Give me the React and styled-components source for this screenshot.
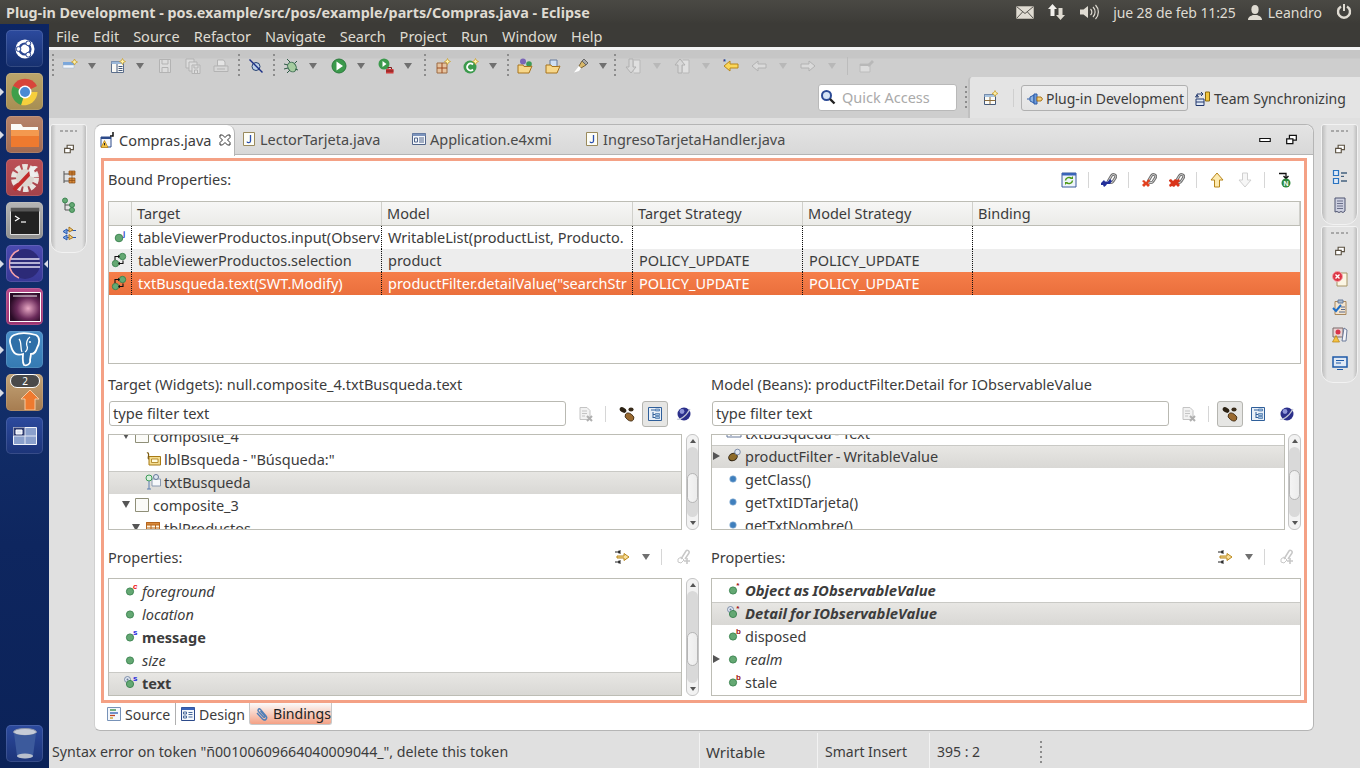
import React from 'react';
import styled, { createGlobalStyle } from 'styled-components';

const UI_FONT = '"Noto Sans", "Open Sans", sans-serif';

const GlobalStyle = createGlobalStyle`
  html, body { margin: 0; padding: 0; background: #e0e0e0; }
  body { font-family: ${UI_FONT}; font-size: 14.5px; color: #3c3c3c; }
  * { box-sizing: border-box; }
  svg { display: block; flex: none; }
`;

/* ---------- small drawn icons ---------- */

const Svg = ({ size = 16, children }) => (
  <svg width={size} height={size} viewBox="0 0 16 16">{children}</svg>
);

const Star = ({ x = 12, y = 3 }) => (
  <path d={`M${x} ${y - 3}l1 2 2 1-2 1-1 2-1-2-2-1 2-1z`} fill="#fff2a8" stroke="#c79a22" strokeWidth=".7" />
);

const Dot = ({ cx = 8, cy = 8, r = 3.6 }) => (
  <circle cx={cx} cy={cy} r={r} fill="#64a873" stroke="#37804c" strokeWidth=".9" />
);

const Letter = ({ c, color, x = 11, y = 5, size = 8 }) => (
  <text x={x} y={y} fontSize={size} fontWeight="700" fontFamily="Liberation Sans, sans-serif" fill={color}>{c}</text>
);

const PropIcon = ({ letter, color, target }) => (
  <Svg>
    {target && <circle cx="4.5" cy="4.5" r="3" fill="#dfe6f0" stroke="#66799a" strokeWidth=".8" />}
    {target && <circle cx="4.5" cy="4.5" r="1" fill="#66799a" />}
    <Dot cx={7} cy={target ? 9 : 8.5} />
    {letter && <Letter c={letter} color={color} x="10" y="6" />}
  </Svg>
);

const MethodIcon = () => <Svg><circle cx="7" cy="8" r="3.3" fill="#3f7fbd" stroke="#9dbcda" strokeWidth=".6" /></Svg>;

const BindIcon = () => (
  <Svg>
    <Dot cx="11.5" cy="4.5" r="3.2" />
    <Dot cx="4.5" cy="11.5" r="3.2" />
    <path d="M4 8V4.500h3.500M12 8.500v3H8.500" stroke="#111" strokeWidth="1.100" fill="none" />
    <path d="M7 2.800l2 1.700-2 1.700zM9 9.800l-2 1.700 2 1.700z" fill="#111" />
  </Svg>
);

const InputBindIcon = () => (
  <Svg>
    <Dot cx="8" cy="9" r="3.8" />
    <Letter c="j" color="#2a43c8" x="12" y="6.500" />
  </Svg>
);

const FileTypeIcon = () => (
  <Svg>
    <path d="M2.500 1.500h11v13h-11z" fill="#fdfdf6" stroke="#9a8a5c" />
    <path d="M9.500 4v6c0 2-3 2.200-3.500 .6" fill="none" stroke="#2a4fb0" strokeWidth="1.300" />
  </Svg>
);

const DesignerTabIcon = () => (
  <Svg>
    <path d="M1 5h10v10H1z" fill="#f5f7fb" stroke="#2c4a8a" />
    <path d="M1 5h10v2H1z" fill="#2c4a8a" />
    <path d="M13 0v4h-3" fill="none" stroke="#111" strokeWidth="1.500" />
    <path d="M4.500 8.500l-3.500 7h7z" fill="#f5c242" stroke="#b57f10" strokeWidth=".7" />
    <path d="M4.500 11v2.300" stroke="#222" />
  </Svg>
);

const XmiIcon = () => (
  <Svg>
    <path d="M1.500 2.500h13v11h-13z" fill="#f4f7fb" stroke="#51658a" />
    <path d="M1.500 2.500h13V5h-13z" fill="#7c94bd" />
    <path d="M3.500 7h3v4h-3zM8 7h5M8 9h5M8 11h5" fill="none" stroke="#51658a" />
  </Svg>
);

const CloseGlyph = () => (
  <svg width="12" height="12" viewBox="0 0 12 12">
    <path d="M1 1h2.500L6 3.500 8.500 1H11v2.500L8.500 6 11 8.500V11H8.500L6 8.500 3.500 11H1V8.500L3.500 6 1 3.500z" fill="#fff" stroke="#333" strokeWidth="1" />
  </svg>
);

const MinimizeIcon = () => <Svg size={12}><path d="M1 6h14v4H1z" fill="#fff" stroke="#111" strokeWidth="1.500" /></Svg>;

const RestoreIcon = ({ color = '#111', size = 11 }) => (
  <Svg size={size}>
    <path d="M5 2h10v7H5z" fill="#fff" stroke={color} strokeWidth="1.800" />
    <path d="M1 7h9v7H1z" fill="#fff" stroke={color} strokeWidth="1.800" />
  </Svg>
);

const FloppyIcon = () => (
  <Svg>
    <path d="M2.500 1.500h11v13h-11z" fill="#dcdcdc" stroke="#b3b3b3" />
    <path d="M5 2v4h6V2M5 14V9.500h6V14" fill="none" stroke="#b3b3b3" />
  </Svg>
);

const SaveAllIcon = () => (
  <Svg>
    <path d="M1 1h8v9H1z" fill="#dcdcdc" stroke="#b3b3b3" />
    <path d="M4 4h8v9H4z" fill="#dcdcdc" stroke="#b3b3b3" />
    <path d="M7 7h8v8.500H7z" fill="#dcdcdc" stroke="#b3b3b3" />
    <path d="M9 7.500V10h4V7.500M9.500 15v-3h3v3" fill="none" stroke="#b3b3b3" />
  </Svg>
);

const PrintIcon = () => (
  <Svg>
    <path d="M4.500 2h6L12 4v4H4.500z" fill="#e4e4e4" stroke="#b3b3b3" />
    <path d="M1 8h14v5.500H1z" fill="#d6d6d6" stroke="#b3b3b3" />
    <path d="M4 11h8" stroke="#b3b3b3" />
  </Svg>
);

const NewPluginIcon = () => (
  <Svg>
    <path d="M1 4h11v3H1z" fill="#7aa7dc" />
    <path d="M1 7h11v3H1z" fill="#f2f6fb" stroke="#9ab0cc" strokeWidth=".5" />
    <Star x={12.5} y={4} />
  </Svg>
);

const NewClassesIcon = () => (
  <Svg>
    <path d="M1.500 3.500h12v11h-12z" fill="#f8f8f4" stroke="#5c6f8c" />
    <path d="M1.500 3.500h12V6h-12z" fill="#9cb8d8" />
    <path d="M7 6v8M8.500 8.500h4M8.500 10.500h4M8.500 12.500h4" stroke="#44597a" />
    <Star x={12.5} y={3.5} />
  </Svg>
);

const SkipIcon = () => (
  <Svg>
    <ellipse cx="8" cy="8.500" rx="4" ry="4" fill="#bcd0e8" stroke="#24406f" />
    <path d="M1.500 1.500l13 13" stroke="#1b2f86" strokeWidth="1.500" />
  </Svg>
);

const DebugIcon = () => (
  <Svg>
    <ellipse cx="9" cy="9" rx="4" ry="5" fill="#a5cc9f" stroke="#3d6e52" transform="rotate(-30 9 9)" />
    <path d="M4 1l3 3M1 6l4 1M1 11l4-1M4 15l3-3M14 3l-2 2M15 12l-3-1" stroke="#2c5a44" strokeWidth="1" />
  </Svg>
);

const RunIcon = () => (
  <Svg>
    <circle cx="8" cy="8" r="7" fill="#3b9a4c" stroke="#2b7a3c" />
    <path d="M5.500 3.500L12 8l-6.500 4.500z" fill="#fff" />
  </Svg>
);

const ExtRunIcon = () => (
  <Svg>
    <circle cx="6" cy="6" r="5.500" fill="#3b9a4c" />
    <path d="M4.500 3l4 3-4 3z" fill="#fff" />
    <path d="M8 11h7.500v4.500H8z" fill="#cc3b3b" />
    <path d="M10 11V9.500h3.500V11M8 13h7.500" fill="none" stroke="#7c1c1c" />
  </Svg>
);

const NewPackageIcon = () => (
  <Svg>
    <path d="M2 5h10v10H2z" fill="#e6c4a0" stroke="#9c6a42" />
    <path d="M7 5v10M2 10h10" stroke="#9c4a22" />
    <Star x={12.5} y={3.5} />
  </Svg>
);

const NewCIcon = () => (
  <Svg>
    <circle cx="7" cy="9" r="6.500" fill="#3b9a4c" />
    <path d="M10 6.500a3.500 3.500 0 1 0 0 5" fill="none" stroke="#fff" strokeWidth="1.800" />
    <Star x={12.5} y={3.5} />
  </Svg>
);

const OpenTypeIcon = () => (
  <Svg>
    <circle cx="6" cy="3.500" r="3" fill="#7a66b8" />
    <circle cx="12" cy="6" r="2.800" fill="#3d9a58" />
    <path d="M1 7h5l1 1.500h6L15 8l-3 7H1z" fill="#f7d78a" stroke="#a8741c" />
  </Svg>
);

const OpenTaskIcon = () => (
  <Svg>
    <path d="M5 2h7v7H5z" fill="#cfe0f4" stroke="#64789a" />
    <path d="M1 7h5l1 1.500h6L15 8l-3 7H1z" fill="#f7d78a" stroke="#a8741c" />
  </Svg>
);

const HighlightIcon = () => (
  <Svg>
    <path d="M9 3l4 4-5 3-2-2z" fill="#d8b86a" stroke="#7c6434" />
    <path d="M11 1l4 4-2 2-4-4z" fill="#a8a8a8" stroke="#666" />
    <path d="M6 8l2 2-2 3-5 1.500z" fill="#fff" />
  </Svg>
);

const ArrowDocIcon = ({ up }) => (
  <Svg>
    <path d="M9 2h6v13H9" fill="#e0e0e0" stroke="#b8b8b8" />
    <path d={up ? 'M6 1l5 6H8v8H4V7H1z' : 'M4 1h4v8h3l-5 6-5-6h3z'} fill="#d8d8d8" stroke="#b0b0b0" />
  </Svg>
);

const AnnotationBackIcon = () => (
  <Svg>
    <path d="M1 8l6-5v3h8v4H7v3z" fill="#fbd75a" stroke="#b8861a" />
    <Letter c="*" color="#1b3a8a" x="0" y="6" size="7" />
  </Svg>
);

const GreyArrow = ({ right }) => (
  <Svg>
    <path d={right ? 'M15 8L9 3v3H1v4h8v3z' : 'M1 8l6-5v3h8v4H7v3z'} fill="#dadada" stroke="#b2b2b2" />
  </Svg>
);

const PinIcon = () => (
  <Svg>
    <path d="M1 6h10v8H1z" fill="#dcdcdc" stroke="#bcbcbc" />
    <path d="M1 6h10v2H1zM8 7l5-5 2 2-5 5z" fill="#b8b8b8" />
  </Svg>
);

const SearchGlass = () => (
  <Svg>
    <circle cx="6.500" cy="6.500" r="4.500" fill="#d6e4f6" stroke="#2b4a96" strokeWidth="2" />
    <path d="M10 10l4.500 4.500" stroke="#222" strokeWidth="2.400" />
  </Svg>
);

const OpenPerspectiveIcon = () => (
  <Svg>
    <path d="M1.500 4.500h11v10h-11z" fill="#fbfbf6" stroke="#44597a" />
    <path d="M1.500 4.500h11V7h-11z" fill="#a7c3e0" />
    <path d="M7 7v7.500M1.500 10.500h11" stroke="#8a6a3a" />
    <Star x={12} y={3.5} />
  </Svg>
);

const PluginPerspectiveIcon = () => (
  <Svg>
    <path d="M0 8h3M3 6l4-2v8l-4-2z" fill="#8db4e4" stroke="#2c5ca8" />
    <path d="M7 3h3v10H7z" fill="#6e9ad8" stroke="#2c5ca8" />
    <path d="M10 6h4l1.500 2-1.500 2h-4z" fill="#f2cf7c" stroke="#a8741c" />
  </Svg>
);

const TeamIcon = () => (
  <Svg>
    <path d="M1 8h8v6.500H1zM1 11h8" fill="#dfe8f5" stroke="#22386e" />
    <path d="M2 5.500V3h6M6 1l2 2-2 2M2 4L.5 6h3z" fill="none" stroke="#22386e" />
    <path d="M10.500 1h4v9h-4z" fill="#f2c53d" stroke="#8a6a10" />
  </Svg>
);

const RefreshIcon = () => (
  <Svg>
    <path d="M1 1h14v14H1z" fill="#eef4fb" stroke="#3a5a9a" />
    <path d="M1 1h14v2.500H1z" fill="#3a64b8" />
    <path d="M4.500 8.500a3.500 3.500 0 0 1 6-2M11.500 8.500a3.500 3.500 0 0 1-6 2" fill="none" stroke="#4e9a16" strokeWidth="1.500" />
    <path d="M9 7h3V4zM7 10H4v3z" fill="#4e9a16" />
  </Svg>
);

const CHAIN = 'M7 9.500l3.500-6C12 1.500 15.500 3 14.500 5.500L12 9.500c-1 1.500-3 1.500-4 .5';

const LinkIcon = ({ badge }) => (
  <Svg>
    <path d={CHAIN} fill="none" stroke="#6f6f6f" strokeWidth="2.800" />
    <path d={CHAIN} fill="none" stroke="#d8d8d8" strokeWidth="1" />
    {badge === 'edit' && <path d="M0 11l3-3 1 1.500h3L9 7l2 2-2 3H6l-1 1.500L3 15l-1-2H0z" fill="#23309a" />}
    {badge === 'remove' && <path d="M1 9l2-1 2 2 3-3 1 2-2 2 2 2-2 2-2-2-2 2-2-2 2-2z" fill="#e2411f" />}
    {badge === 'removeAll' && <path d="M0 8l2-1 2 2 2-2 2 1 2-1 1 2-2 2 2 2-2 2-2-2-2 2-2-1-2 1-1-2 2-2-2-2z" fill="#d9341a" />}
  </Svg>
);

const UpArrowIcon = () => (
  <Svg><path d="M8 1l6 7h-3.500v7h-5V8H2z" fill="#fdeab0" stroke="#b8861a" /></Svg>
);

const DownArrowIcon = () => (
  <Svg><path d="M8 15l6-7h-3.500V1h-5v7H2z" fill="#f6f6f6" stroke="#d0d0d0" /></Svg>
);

const NewBindIcon = () => (
  <Svg>
    <path d="M2 1.500h7v4M6.500 4L9 6.500 11.500 4" fill="none" stroke="#111" strokeWidth="1.300" />
    <circle cx="9" cy="11" r="4.500" fill="#2d8a3e" />
    <Letter c="N" color="#fff" x="6.500" y="13.500" size="7" />
  </Svg>
);

const ClearFilterIcon = () => (
  <Svg>
    <path d="M2 1.500h7l3 3v9H2zM4 5h5M4 7.500h5M4 10h3" fill="#f2f2f2" stroke="#c4c4c4" />
    <path d="M9 10l5 5M14 10l-5 5" stroke="#b0b0b0" strokeWidth="2" />
  </Svg>
);

const BeansIcon = () => (
  <Svg>
    <ellipse cx="4" cy="4" rx="3.600" ry="2.400" fill="#2c2214" transform="rotate(30 4 4)" />
    <ellipse cx="12" cy="3.500" rx="2.600" ry="2" fill="#3a2c1a" />
    <ellipse cx="10.500" cy="11" rx="4.800" ry="3.300" fill="#9a6a30" stroke="#3e2a12" strokeWidth=".8" transform="rotate(35 10.500 11)" />
  </Svg>
);

const TreeModeIcon = () => (
  <Svg>
    <path d="M1.500 1.500h13v13h-13z" fill="#e9f0f8" stroke="#2f5f9a" />
    <path d="M4 4h4M6 6v6M6 8.500h2M6 11.500h2" stroke="#2f5f9a" fill="none" />
    <path d="M8.500 7.500h4v2h-4zM8.500 10.500h4v2h-4zM8.500 3h4v2h-4z" fill="#9fbfe0" stroke="#2f5f9a" strokeWidth=".6" />
  </Svg>
);

const GlobeIcon = () => (
  <Svg>
    <circle cx="8" cy="8" r="6.500" fill="#2b2f8a" />
    <circle cx="6" cy="5.500" r="2.400" fill="#8f96d8" />
    <path d="M1 13c2 1 8-1 13-10" stroke="#c4c8d6" strokeWidth="1.200" fill="none" />
  </Svg>
);

const CheckBoxIcon = () => (
  <Svg><path d="M1.500 1.500h13v13h-13z" fill="#fbfbf8" stroke="#8f8f78" /></Svg>
);

const LabelIcon = () => (
  <Svg>
    <path d="M4 5.500h11.500V14H4z" fill="#f3dc90" stroke="#a87a14" />
    <path d="M6.500 8H13v3.500H6.500z" fill="#fffbe0" stroke="#a87a14" strokeWidth=".8" />
    <path d="M2 2c1-1 2 1 1.500 3S3 8 4 8" fill="none" stroke="#7a5a10" strokeWidth="1.200" />
  </Svg>
);

const TextWidgetIcon = () => (
  <Svg>
    <path d="M7 5h8.500v7H7z" fill="#f6f8fb" stroke="#8a9ab0" />
    <circle cx="4" cy="4" r="3" fill="#d6f0dc" stroke="#3d9a58" />
    <circle cx="11" cy="3" r="2.500" fill="#dfe6f0" stroke="#66799a" />
    <path d="M4 7v8M2 15h4" stroke="#5a7fb0" />
  </Svg>
);

const TableIcon = () => (
  <Svg>
    <path d="M1.500 2.500h13v11h-13z" fill="#fff5df" stroke="#b5651d" />
    <path d="M1.500 2.500h13V5h-13zM6 5v8.500M10.500 5v8.500M1.500 8h13M1.500 11h13" fill="#d98a3a" stroke="#b5651d" />
  </Svg>
);

const TextTreeIcon = () => (
  <Svg><path d="M1 5h14M5 3v8M1 8h14v4H1z" fill="none" stroke="#66799a" /></Svg>
);

const BeanItemIcon = () => (
  <Svg>
    <ellipse cx="7" cy="9" rx="4.500" ry="3.500" fill="#8c6a2a" stroke="#2c2010" strokeWidth=".9" transform="rotate(-30 7 9)" />
    <circle cx="11.500" cy="4" r="2.800" fill="#dfe6f0" stroke="#66799a" strokeWidth=".8" />
  </Svg>
);

const ExpandIcon = () => (
  <Svg>
    <path d="M1 3h5M1 13h5M6 1v4M6 11v4M4 2l2 1-2 1M4 12l2 1-2 1" stroke="#222" fill="none" />
    <path d="M3 7h7V4.500L15 8l-5 3.500V9H3z" fill="#fbe09a" stroke="#b8861a" />
  </Svg>
);

const AddPropIcon = () => (
  <Svg>
    <path d="M5 10l5-8c1-1.500 4 0 3 2l-4 6" fill="none" stroke="#c8c8c8" strokeWidth="1.500" />
    <path d="M2 10l3-2 3 3-3 3-3-1z" fill="none" stroke="#c8c8c8" />
    <path d="M11 9v6M8 12h6" stroke="#c8c8c8" strokeWidth="1.600" />
  </Svg>
);

const SourcePageIcon = () => (
  <Svg>
    <path d="M1.500 1.500h13v13h-13z" fill="#f3f7fc" stroke="#7792b8" />
    <path d="M4 4h6" stroke="#2c8a3a" strokeWidth="1.300" /><path d="M4 7h8" stroke="#2a5ab0" strokeWidth="1.300" />
    <path d="M4 9.500h5" stroke="#c04020" strokeWidth="1.300" /><path d="M4 12h3" stroke="#c49a20" strokeWidth="1.300" />
  </Svg>
);

const DesignPageIcon = () => (
  <Svg>
    <path d="M1.500 1.500h13v13h-13z" fill="#f3f7fc" stroke="#2c4a8a" />
    <path d="M1.500 1.500h13V4h-13z" fill="#3a64b8" />
    <path d="M3.500 6h3v2h-3zM3.500 10h3v2h-3zM8.500 6.500h4M8.500 8.500h4M8.500 11h4" fill="none" stroke="#4a6a9a" />
  </Svg>
);

const PaperclipIcon = () => (
  <Svg>
    <path d="M3 7l5.500 6c2.500 2.500 5.500-.5 3.500-3L6.500 3.500C5 2 3 3.500 4.500 5.500L9.500 11c1 1 2-.2 1-1.500L6.500 5" fill="none" stroke="#4f7fb8" strokeWidth="1.400" />
  </Svg>
);

const PartHierarchyIcon = () => (
  <Svg>
    <path d="M3 2v12M3 5h5M3 12h5" stroke="#555" fill="none" />
    <path d="M8 2h6v4H8zM8 9h6v5H8z" fill="#d98a3a" stroke="#8a4a12" strokeWidth=".7" />
    <path d="M11 2v12M8 4h6M8 11.500h6" stroke="#8a4a12" strokeWidth=".7" />
  </Svg>
);

const GreenTreeIcon = () => (
  <Svg>
    <path d="M4 4v9M4 8h5M4 13h5" stroke="#555" fill="none" />
    <Dot cx="4" cy="3.500" r="2.500" />
    <Dot cx="11" cy="8" r="2.500" />
    <Dot cx="11" cy="13" r="2.500" />
  </Svg>
);

const BindingsPartIcon = () => (
  <Svg>
    <path d="M6 4L2 6.500 6 9zM6 10l-4 2.500L6 15z" fill="#7da8e0" stroke="#2a5ab0" />
    <path d="M6 5.500h9M6 12.500h9" stroke="#2a5ab0" />
    <path d="M8 2l4 3-4 2zM8 9.500l4 3-4 2z" fill="#f2cf7c" stroke="#a8741c" />
  </Svg>
);

const ChecklistIcon = () => (
  <Svg>
    <path d="M1.500 1.500h5v5h-5zM1.500 9.500h5v5h-5z" fill="#dfeaf8" stroke="#2a74c0" strokeWidth="1.200" />
    <path d="M9 4h6M9 12h6" stroke="#44617f" strokeWidth="1.400" />
    <path d="M9 8h3V6.800H9z" fill="#44617f" />
  </Svg>
);

const OutlineDocIcon = () => (
  <Svg>
    <path d="M3 1h10v13l-2 1.500-2-1-2 1-2-1-2 .5z" fill="#cdd0e0" stroke="#4f5470" />
    <path d="M5 4h6M5 6.500h6M5 9h6M5 11.500h6" stroke="#6a6f8a" />
  </Svg>
);

const ProblemsIcon = () => (
  <Svg>
    <path d="M5 2h10v13H5z" fill="#fbf6e4" stroke="#a89464" />
    <circle cx="5.500" cy="5.500" r="5" fill="#dc3545" stroke="#f2a0a8" />
    <path d="M3.500 3.500l4 4M7.500 3.500l-4 4" stroke="#fff" strokeWidth="1.400" />
  </Svg>
);

const TasksIcon = () => (
  <Svg>
    <path d="M3 2.500h11v13H3z" fill="#f2e4d0" stroke="#a8875c" />
    <path d="M6 1h5v3H6z" fill="#aabbd0" stroke="#667a9a" />
    <path d="M1 9l3 3 5-6" fill="none" stroke="#1e6fc8" strokeWidth="2" />
    <path d="M9 8h4M9 10.500h4M7 13h6" stroke="#5a6a8a" />
  </Svg>
);

const ErrorLogIcon = () => (
  <Svg>
    <path d="M1 1h10v9H1z" fill="#e8d4d4" stroke="#7a6a6a" />
    <circle cx="6" cy="5" r="2.500" fill="#d9344a" />
    <path d="M12 1l3 2-1 11h-4z" fill="#f4f4f8" stroke="#6a7a9a" />
    <path d="M4 8.500L7.500 15H.5z" fill="#f5c242" stroke="#b57f10" strokeWidth=".7" />
  </Svg>
);

const ConsoleIcon = () => (
  <Svg>
    <path d="M1 2h14v10H1z" fill="#dfe8f4" stroke="#1e5aa8" strokeWidth="1.500" />
    <path d="M4 5.500h8M4 8h5" stroke="#1e5aa8" />
    <path d="M5 14h6v1H5z" fill="#1e5aa8" />
  </Svg>
);

/* tray */
const MailIcon = () => (
  <svg width="18" height="13" viewBox="0 0 18 13">
    <path d="M.5.5h17v12H.5z" fill="#dfdbd2" stroke="#b5b1a8" />
    <path d="M.5.500L9 7.500 17.500.5M.5 12.500L6.500 6M17.500 12.500L11.500 6" fill="none" stroke="#55534d" />
  </svg>
);

const TrafficIcon = () => (
  <svg width="18" height="16" viewBox="0 0 18 16">
    <path d="M4.500 0L9 5H6.500v7h-4V5H0z" fill="#f2f0ec" />
    <path d="M12.500 16L8 11h2.500V4h4v7H17z" fill="#dfdbd2" />
  </svg>
);

const VolumeIcon = () => (
  <svg width="20" height="16" viewBox="0 0 20 16">
    <path d="M0 5.500h3.500L8 2v12l-4.500-3.500H0z" fill="#dfdbd2" />
    <path d="M10.500 5a4 4 0 0 1 0 6M13 3a7 7 0 0 1 0 10M15.500 1a10 10 0 0 1 0 14" fill="none" stroke="#dfdbd2" strokeWidth="1.200" />
  </svg>
);

const UserIcon = () => (
  <svg width="14" height="15" viewBox="0 0 14 15">
    <ellipse cx="7" cy="4.500" rx="3.600" ry="4.500" fill="#dfdbd2" />
    <path d="M0 15c0-3.500 3-4 5-5h4c2 1 5 1.500 5 5z" fill="#dfdbd2" />
  </svg>
);

const PowerIcon = () => (
  <svg width="16" height="16" viewBox="0 0 16 16">
    <path d="M5 2.500a6 6 0 1 0 6 0" fill="none" stroke="#dfdbd2" strokeWidth="2.400" />
    <path d="M8 0v7" stroke="#dfdbd2" strokeWidth="2" />
  </svg>
);

/* launcher */
const UbuntuLogo = () => (
  <svg width="24" height="24" viewBox="0 0 24 24">
    <circle cx="12" cy="12" r="9.500" fill="#fff" />
    <circle cx="12" cy="12" r="5.500" fill="none" stroke="#2b4793" strokeWidth="2.200" />
    <circle cx="5.500" cy="12" r="2.400" fill="#fff" stroke="#2b4793" />
    <circle cx="15.300" cy="6.300" r="2.400" fill="#fff" stroke="#2b4793" />
    <circle cx="15.300" cy="17.700" r="2.400" fill="#fff" stroke="#2b4793" />
  </svg>
);

const ChromeLogo = () => (
  <svg width="30" height="30" viewBox="0 0 30 30">
    <path d="M15 15L3 9a13.500 13.500 0 0 1 24 0z" fill="#d8453a" />
    <path d="M15 15h12.500A13.500 13.500 0 0 1 11 28z" fill="#f6cf3c" />
    <path d="M15 15l-4 13A13.500 13.500 0 0 1 3 9z" fill="#3f9f4a" />
    <circle cx="15" cy="15" r="6.500" fill="#fff" />
    <circle cx="15" cy="15" r="5" fill="#4a8ad4" />
  </svg>
);

const FolderLogo = () => (
  <svg width="30" height="28" viewBox="0 0 30 28">
    <path d="M1 3h10l2 3h15v5H1z" fill="#fbfaf6" />
    <path d="M1 9h28v17H1z" fill="#ee7a2f" />
    <path d="M1 9h28v6H1z" fill="#f4994f" />
  </svg>
);

const SettingsLogo = () => (
  <svg width="32" height="32" viewBox="0 0 32 32">
    <circle cx="16" cy="16" r="11" fill="none" stroke="#e9e4e0" strokeWidth="6" strokeDasharray="5 2" />
    <circle cx="16" cy="16" r="9" fill="#dcd6d0" />
    <path d="M5 28L22 10" stroke="#c22b2b" strokeWidth="4" />
    <path d="M20 8c2-4 6-5 9-3l-4 3 1 3 3 1c-1 3-5 4-8 2z" fill="#eee" />
  </svg>
);

const TerminalLogo = () => (
  <svg width="30" height="28" viewBox="0 0 30 28">
    <path d="M.5.5h29v27H.5z" fill="#222" stroke="#ddd" />
    <path d="M.5.5h29v4H.5z" fill="#555" />
    <path d="M5 9l4 2.500L5 14" fill="none" stroke="#fff" strokeWidth="1.200" />
    <path d="M11 15h5" stroke="#fff" strokeWidth="1.200" />
  </svg>
);

const EclipseLogo = () => (
  <svg width="32" height="32" viewBox="0 0 32 32">
    <circle cx="16" cy="16" r="15" fill="#2c2a78" />
    <path d="M1.500 11h29M1 15h30M1 19h30" stroke="#e4e0f4" strokeWidth="1.300" />
    <path d="M10 2a15 15 0 0 0 0 28" fill="none" stroke="#f4a0a8" strokeWidth="1.500" />
  </svg>
);

const PhotoLogo = () => (
  <svg width="32" height="30" viewBox="0 0 32 30">
    <defs>
      <radialGradient id="photoGlow" cx=".6" cy=".55" r=".6">
        <stop offset="0" stopColor="#e8a8c4" /><stop offset=".6" stopColor="#6a2a5a" /><stop offset="1" stopColor="#2a0c26" />
      </radialGradient>
    </defs>
    <path d="M.5.5h31v29H.5z" fill="url(#photoGlow)" stroke="#fff" />
    <path d="M4 4h24" stroke="#f4f0f4" />
  </svg>
);

const ElephantLogo = () => (
  <svg width="34" height="35" viewBox="0 0 34 35">
    <path d="M6 3c7-3 15-2 22 0 4 2 4 8 1 13-1 3-2 6-6 6l-1 6c1 4-3 6-6 5-2-3-1-8-1-11-6 2-10 0-12-8C1 9 2 5 6 3z" fill="#2f6fa8" stroke="#fff" strokeWidth="1.800" />
    <path d="M11 7c3 3 1 9 3 13M22 5c-3 2-4 6-3 9 1 2 0 5-2 6" fill="none" stroke="#fff" strokeWidth="1.300" />
    <circle cx="22" cy="10" r="1" fill="#fff" />
  </svg>
);

const UpdateArrow = () => (
  <svg width="18" height="20" viewBox="0 0 18 20">
    <path d="M9 0l9 9h-4v11H4V9H0z" fill="#ee7a2f" stroke="#f6c9a0" />
  </svg>
);

const WorkspaceLogo = () => (
  <svg width="24" height="18" viewBox="0 0 24 18">
    <path d="M.5.5h23v17H.5z" fill="#8aa0cc" stroke="#f2f4fa" strokeWidth="1" />
    <path d="M.5.5H12V9H.5z" fill="#2c3a70" />
    <path d="M3 3h6v4H3z" fill="#dde4f4" stroke="#fff" />
    <path d="M12 .5v17M.5 9h23" stroke="#e0e6f4" />
  </svg>
);

const TrashLogo = () => (
  <svg width="24" height="31" viewBox="0 0 24 31">
    <ellipse cx="12" cy="4" rx="11.500" ry="3.500" fill="#c6ccd8" stroke="#8f97aa" />
    <path d="M1 5l3 23c1 3 15 3 16 0l3-23c-4 3-18 3-22 0z" fill="#3c5a9c" />
    <ellipse cx="12" cy="28" rx="8" ry="2.500" fill="#b8bfcc" />
  </svg>
);

/* ---------- layout ---------- */

const Screen = styled.div`
  width: 1360px;
  height: 768px;
  display: flex;
  flex-direction: column;
  overflow: hidden;
`;

const TitleBar = styled.div`
  height: 24px;
  flex: none;
  display: flex;
  align-items: center;
  padding-left: 6px;
  background: linear-gradient(#4a4944, #3c3b37);
  color: #dfdbd2;
`;

const WindowTitle = styled.div`
  flex: 1;
  font-size: 14.35px;
  font-weight: 700;
  white-space: nowrap;
`;

const Tray = styled.div`
  display: flex;
  align-items: center;
  padding-right: 8px;
`;

const TrayText = styled.span`
  font-size: 14px;
  letter-spacing: ${({ $tight }) => ($tight ? '-0.1px' : '0')};
  margin-left: ${({ $left }) => $left}px;
  white-space: nowrap;
`;

const TraySlot = styled.span`
  margin-left: ${({ $left }) => $left}px;
`;

const Desktop = styled.div`
  flex: 1;
  min-height: 0;
  display: flex;
`;

const Launcher = styled.div`
  width: 49px;
  flex: none;
  display: flex;
  flex-direction: column;
  gap: 6px;
  padding: 6px 0 6px 6px;
  background: linear-gradient(#0c2563 0, #13306c 45%, #0e265f 70%, #0b2258 100%);
`;

const Tile = styled.div`
  position: relative;
  width: 37px;
  height: 37px;
  flex: none;
  border-radius: 5px;
  display: flex;
  align-items: center;
  justify-content: center;
  background: ${({ $bg }) => $bg};
  box-shadow: inset 0 0 0 1px rgba(255, 255, 255, 0.12);
  margin-top: ${({ $push }) => ($push ? 'auto' : '0')};
`;

const Pip = styled.span`
  position: absolute;
  top: 15px;
  ${({ $right }) => ($right ? 'left: 38px; border-right: 4px solid #d8dce6;' : 'left: -6px; border-left: 4px solid #d8dce6;')}
  border-top: 4px solid transparent;
  border-bottom: 4px solid transparent;
`;

const CountBadge = styled.span`
  position: absolute;
  top: 0;
  left: 4px;
  width: 30px;
  height: 14px;
  border-radius: 7px;
  background: #4a4a4a;
  border: 1px solid #fff;
  color: #fff;
  font-size: 10px;
  line-height: 12px;
  text-align: center;
`;

const TileLow = styled.div`
  margin: 14px 0 0 10px;
`;

const Workbench = styled.div`
  flex: 1;
  min-width: 0;
  display: flex;
  flex-direction: column;
`;

const MenuBar = styled.div`
  height: 23px;
  flex: none;
  display: flex;
  align-items: center;
  padding-left: 7px;
  gap: 14px;
  background: #3c3b37;
  color: #dfdbd2;
`;

const MainToolbar = styled.div`
  height: 31px;
  flex: none;
  display: flex;
  align-items: center;
  padding: 3px 0 0 0;
  border-top: 3px solid #f4f4f4;
  background: linear-gradient(#c6c6c6 0, #c6c6c6 8px, #cecece 9px);
`;

const ToolBtn = styled.div`
  width: 28px;
  height: 24px;
  flex: none;
  display: flex;
  align-items: center;
  justify-content: center;
`;

const DropArrow = styled.div`
  width: ${({ $wide, $faded }) => ($faded ? 21 : $wide ? 20 : 19.5)}px;
  flex: none;
  display: flex;
  justify-content: ${({ $center }) => ($center ? 'center' : 'flex-start')};
  padding-left: ${({ $center, $faded }) => ($center ? 0 : $faded ? 6 : 4)}px;

  &::after {
    content: '';
    border-left: 4px solid transparent;
    border-right: 4px solid transparent;
    border-top: 6px solid ${({ $faded }) => ($faded ? '#b8b8b8' : '#707070')};
  }
`;

const Grip = styled.div`
  width: 7px;
  height: 24px;
  flex: none;
  margin-left: ${({ $left }) => $left || 0}px;
  background: repeating-linear-gradient(#8c8c8c 0 2px, transparent 2px 5px) center / 2px 100% no-repeat;
`;

const StatusGrip = styled(Grip)`
  margin-top: 8px;
`;

const ToolLine = styled.div`
  width: 1px;
  height: 18px;
  flex: none;
  background: #bcbcbc;
  margin: 0 5px 0 4px;
`;

const SecondaryBar = styled.div`
  height: 40px;
  flex: none;
  display: flex;
  justify-content: flex-end;
  align-items: stretch;
  background: #cecece;
`;

const QuickAccess = styled.div`
  width: 139px;
  height: 27px;
  margin-top: 6px;
  display: flex;
  align-items: center;
  gap: 6px;
  padding: 0 0 2px 1px;
  background: #fff;
  border: 1px solid #b9b9b9;
  border-radius: 3px;
  color: #aaaaaa;
`;

const GripSlot = styled.div`
  width: 11px;
  display: flex;
  align-items: center;
  padding-left: 5px;
`;

const PerspectiveBar = styled.div`
  width: 392px;
  margin-top: -1px;
  display: flex;
  align-items: center;
  padding-left: 13px;
  background: #e4e4e4;
  border-left: 2px solid #c0c0c0;
  border-radius: 4px 0 0 0;
  font-size: 14px;
  color: #3c3c3c;
`;

const PerspectiveSep = styled.div`
  width: 1px;
  height: 18px;
  margin: 0 7px 0 14px;
  background: #cfcfcf;
`;

const PerspectiveBtn = styled.div`
  display: flex;
  align-items: center;
  gap: ${({ $gap }) => $gap}px;
  width: ${({ $width }) => $width}px;
  height: 26px;
  padding: 2px 0 0 ${({ $active }) => ($active ? 5 : 7)}px;
  border-radius: 3px;
  white-space: nowrap;
  ${({ $active }) => $active && 'border: 1px solid #b0b0b0; background: linear-gradient(#ededed, #e3e3e3);'}
`;

const MainArea = styled.div`
  flex: 1;
  min-height: 0;
  display: flex;
  padding: 6px 2px 2px 1px;
  background: #e0e0e0;
`;

const TrimColumn = styled.div`
  width: 37px;
  flex: none;
  display: flex;
  flex-direction: column;
  gap: 1px;
`;

const Trim = styled.div`
  padding: 10px 0 5px;
  border: 1px solid #f2f2f2;
  border-radius: 3px 3px 12px 12px;
  background: linear-gradient(90deg, #bdbdbd 0, #e2e2e2 5px, #e2e2e2 31px, #bdbdbd 100%);

  &::before {
    content: '';
    display: block;
    height: 2px;
    margin: -5px 9px 3px;
    background: repeating-linear-gradient(90deg, #a8a8a8 0 3px, transparent 3px 5px);
  }
`;

const TrimCell = styled.div`
  height: 28px;
  display: flex;
  align-items: center;
  justify-content: center;
`;

const EditorCard = styled.div`
  width: 1220px;
  margin: 0 7px;
  height: 607px;
  display: flex;
  flex-direction: column;
  background: #fff;
  border: 1px solid #b5b5b5;
  border-left-color: #d0d0d0;
  border-radius: 8px 8px 6px 6px;
`;

const TabStrip = styled.div`
  height: 30px;
  flex: none;
  display: flex;
  align-items: stretch;
  background: linear-gradient(#e4e4e4, #d8d8d8);
  border-bottom: 1px solid #b5b5b5;
  border-radius: 8px 8px 0 0;
`;

const Tab = styled.div`
  width: ${({ $width }) => $width}px;
  flex: none;
  display: flex;
  align-items: center;
  gap: 3px;
  padding: 0 0 2px ${({ $active }) => ($active ? 5 : 6)}px;
  white-space: nowrap;
  color: ${({ $active }) => ($active ? '#3c3c3c' : '#4a4a4a')};
  ${({ $active }) => $active && `
    height: 31px;
    background: #fff;
    border-right: 1px solid #b5b5b5;
    border-radius: 8px 8px 0 0;
  `}
`;

const CloseSlot = styled.span`
  margin-left: 5px;
`;

const StripSpacer = styled.div`
  flex: 1;
`;

const PartControls = styled.div`
  display: flex;
  align-items: center;
  gap: 15px;
  padding-right: 16px;
`;

const Form = styled.div`
  width: 1206px;
  height: 545px;
  flex: none;
  margin: 3px 0 0 6px;
  display: flex;
  flex-direction: column;
  padding: 0 3px 0 4px;
  border: 3px solid #f4a185;
`;

const BoundHeader = styled.div`
  height: 40px;
  flex: none;
  display: flex;
  align-items: center;
  justify-content: space-between;
  padding-bottom: 2px;
`;

const BoundLabel = styled.span`
  margin-top: -2px;
`;

const SectionTools = styled.div`
  display: flex;
  align-items: center;
  padding-right: ${({ $pad }) => $pad || 0}px;
`;

const SectionSep = styled.div`
  width: 1px;
  height: 16px;
  background: #d6d6d6;
  margin: 0 ${({ $right }) => $right || 6}px 0 ${({ $left }) => $left || 5}px;
`;

const Table = styled.div`
  height: 163px;
  flex: none;
  border: 1px solid #bdbdb5;
`;

const cols = '23px 250px 251px 170px 170px 1fr';

const HeadRow = styled.div`
  height: 24px;
  display: grid;
  grid-template-columns: ${cols};
  background: linear-gradient(#f7f7f6, #ebebe8);
  border-bottom: 1px solid #bdbdb5;
`;

const HeadCell = styled.div`
  display: flex;
  align-items: center;
  padding: 0 0 2px 5px;
  border-right: 1px solid #d0d0cb;
`;

const BodyRow = styled.div`
  height: 23px;
  display: grid;
  grid-template-columns: ${cols};
  background: ${({ $state }) =>
    $state === 'active' ? 'linear-gradient(#f67e4a, #ea6f3c)' : $state === 'alt' ? '#ededed' : '#fff'};
  color: ${({ $state }) => ($state === 'active' ? '#fff' : '#3c3c3c')};
`;

const BodyCell = styled.div`
  display: flex;
  align-items: center;
  padding: 0 0 2px 6px;
  overflow: hidden;
  white-space: nowrap;
  border-right: ${({ $last }) => ($last ? 0 : 1)}px dotted #111;
`;

const IconCell = styled(BodyCell)`
  padding-left: 2px;
`;

const PanelGrid = styled.div`
  flex: 1;
  display: grid;
  grid-template-columns: 590px 590px;
  column-gap: 13px;
`;

const Panel = styled.div`
  display: flex;
  flex-direction: column;
`;

const PanelTitle = styled.div`
  height: 37px;
  flex: none;
  display: flex;
  align-items: center;
  padding-top: 3px;
  white-space: nowrap;
`;

const FilterRow = styled.div`
  height: 25px;
  flex: none;
  display: flex;
  align-items: center;
  margin-bottom: 8px;
`;

const FilterInput = styled.div`
  width: 457px;
  height: 25px;
  flex: none;
  margin-left: 1px;
  display: flex;
  align-items: center;
  padding: 0 0 2px 3px;
  font-size: 14.7px;
  background: #fff;
  border: 1px solid #b9b9b2;
  border-radius: 3px;
  color: #3c3c3c;
`;

const FilterBtn = styled.div`
  width: ${({ $width }) => $width || 26}px;
  height: 26px;
  flex: none;
  margin-left: ${({ $left }) => $left || 0}px;
  display: flex;
  align-items: center;
  justify-content: center;
  border-radius: 3px;
  ${({ $on }) => $on && 'border: 1px solid #b5b5b0; background: #e6e6e4;'}
`;

const ListRow = styled.div`
  display: flex;
  gap: ${({ $gap }) => $gap}px;
  flex: none;
`;

const ListBox = styled.div`
  width: ${({ $width }) => $width}px;
  height: ${({ $height }) => $height}px;
  flex: none;
  overflow: hidden;
  background: #fff;
  border: 1px solid #bdbdb5;
`;

const ListInner = styled.div`
  margin-top: ${({ $offset }) => $offset}px;
`;

const Row = styled.div`
  height: 23px;
  display: flex;
  align-items: center;
  padding: 0 0 2px ${({ $indent }) => $indent}px;
  white-space: nowrap;
  word-spacing: -0.8px;
  font-size: ${({ $bold, $italic }) => ($bold && $italic ? 14.8 : 14.5)}px;
  font-style: ${({ $italic }) => ($italic ? 'italic' : 'normal')};
  font-weight: ${({ $bold }) => ($bold ? 700 : 400)};
  ${({ $selected }) => $selected && `
    background: linear-gradient(#e8e7e4, #d9d8d5);
    box-shadow: inset 0 1px 0 #c9c9c5;
  `}
`;

const Twisty = styled.span`
  width: ${({ $open }) => ($open ? 13 : 9)}px;
  flex: none;
  display: flex;
  justify-content: center;

  &::after {
    content: '';
    ${({ $open }) =>
      $open
        ? 'border-left: 4px solid transparent; border-right: 4px solid transparent; border-top: 7px solid #555;'
        : 'border-top: 4px solid transparent; border-bottom: 4px solid transparent; border-left: 7px solid #555;'}
  }
`;

const RowIcon = styled.span`
  margin: 0 ${({ $gap }) => $gap ?? 3}px 0 ${({ $left }) => $left || 0}px;
`;

const SectionHead = styled.div`
  height: 48px;
  flex: none;
  display: flex;
  align-items: center;
  justify-content: space-between;
  padding-top: 6px;
`;

const Scrollbar = styled.div`
  width: 13px;
  height: ${({ $height }) => $height}px;
  flex: none;
  display: flex;
  flex-direction: column;
  align-items: stretch;
  background: #f2f2f2;
  border: 1px solid #c6c6c6;
  border-radius: 6px;
  overflow: hidden;
`;

const ScrollStep = styled.div`
  height: 12px;
  flex: none;
  display: flex;
  justify-content: center;
  align-items: center;

  &::after {
    content: '';
    border-left: 3px solid transparent;
    border-right: 3px solid transparent;
    ${({ $down }) => ($down ? 'border-top: 4px solid #555;' : 'border-bottom: 4px solid #555;')}
  }
`;

const ScrollTrack = styled.div`
  flex: 1;
  background: #d9d9d9;
  border-radius: 6px;
  padding-top: ${({ $top }) => $top}px;
`;

const ScrollThumb = styled.div`
  height: ${({ $size }) => $size}px;
  background: linear-gradient(90deg, #f4f4f4, #ececec);
  border: 1px solid #b5b5b5;
  border-radius: 6px;
`;

const BottomTabs = styled.div`
  height: 22px;
  flex: none;
  display: flex;
  align-items: stretch;
  padding-left: 6px;
`;

const PageTab = styled.div`
  width: ${({ $width }) => $width}px;
  display: flex;
  align-items: center;
  gap: 3px;
  padding-left: ${({ $pad }) => $pad}px;
  font-size: 14.1px;
  white-space: nowrap;
  ${({ $sep }) => $sep && 'border-right: 1px solid #b0b0b0;'}
  ${({ $active }) => $active && `
    background: linear-gradient(#fbfbfb, #f4a185);
    border: 1px solid #c8c8c8;
    border-top: 0;
    border-radius: 0 0 3px 3px;
    color: #222;
  `}
`;

const StatusBar = styled.div`
  height: 35px;
  flex: none;
  display: flex;
  align-items: stretch;
  background: #e0e0e0;
  white-space: nowrap;
`;

const StatusCell = styled.div`
  width: ${({ $width }) => $width}px;
  display: flex;
  align-items: center;
  padding: 2px 0 0 ${({ $pad }) => $pad}px;
  font-size: ${({ $size }) => $size}px;
  ${({ $sep }) => $sep && 'border-right: 1px solid #f2f2f2;'}
`;

/* ---------- data ---------- */

const launcherItems = [
  { bg: 'linear-gradient(#2c4a9e, #16306f)', node: <UbuntuLogo /> },
  { bg: 'linear-gradient(#bba56c, #a78e52)', node: <ChromeLogo />, pip: true },
  { bg: 'linear-gradient(#b7846a, #a06a52)', node: <FolderLogo />, pip: true },
  { bg: 'linear-gradient(#bb5056, #a5424a)', node: <SettingsLogo /> },
  { bg: 'linear-gradient(#b5b5b5, #8f8f8f)', node: <TerminalLogo /> },
  { bg: 'linear-gradient(#4a4ab0, #383896)', node: <EclipseLogo />, pip: true, pipRight: true },
  { bg: 'linear-gradient(#b84a8a, #9c3370)', node: <PhotoLogo /> },
  { bg: 'linear-gradient(#4a8ec8, #357ab2)', node: <ElephantLogo />, pip: true },
];

const mainTools = [
  ['grip'], ['btn', NewPluginIcon], ['drop'], ['btn', NewClassesIcon], ['drop'],
  ['btn', FloppyIcon], ['btn', SaveAllIcon], ['btn', PrintIcon], ['grip'],
  ['btn', SkipIcon], ['grip'], ['btn', DebugIcon], ['drop'], ['btn', RunIcon], ['drop'], ['btn', ExtRunIcon], ['drop'], ['grip', 2],
  ['btn', NewPackageIcon], ['btn', NewCIcon], ['drop'], ['grip'],
  ['btn', OpenTypeIcon], ['btn', OpenTaskIcon], ['btn', HighlightIcon], ['drop'], ['grip', -3],
  ['btn', () => <ArrowDocIcon />], ['faded'], ['btn', () => <ArrowDocIcon up />], ['faded'],
  ['btn', AnnotationBackIcon], ['btn', () => <GreyArrow />], ['faded'], ['btn', () => <GreyArrow right />], ['faded'], ['line'],
  ['btn', PinIcon],
];

const bindings = [
  { icon: <InputBindIcon />, cells: ['tableViewerProductos.input(Observ', 'WritableList(productList, Producto.', '', '', ''] },
  { icon: <BindIcon />, state: 'alt', cells: ['tableViewerProductos.selection', 'product', 'POLICY_UPDATE', 'POLICY_UPDATE', ''] },
  { icon: <BindIcon />, state: 'active', cells: ['txtBusqueda.text(SWT.Modify)', 'productFilter.detailValue("searchStr', 'POLICY_UPDATE', 'POLICY_UPDATE', ''] },
];

const ThumbScroll = ({ height, top, size }) => (
  <Scrollbar $height={height}>
    <ScrollStep />
    <ScrollTrack $top={top}><ScrollThumb $size={size} /></ScrollTrack>
    <ScrollStep $down />
  </Scrollbar>
);

const FilterTools = ({ on }) => (
  <>
    <FilterBtn $width={28} $left={6}><ClearFilterIcon /></FilterBtn>
    <SectionSep $left={5} $right={8} />
    <FilterBtn $on={on === 'beans'}><BeansIcon /></FilterBtn>
    <FilterBtn $on={on === 'tree'} $left={2}><TreeModeIcon /></FilterBtn>
    <FilterBtn $width={28} $left={2}><GlobeIcon /></FilterBtn>
  </>
);

const PropertyTools = () => (
  <SectionTools>
    <ToolBtn><ExpandIcon /></ToolBtn>
    <DropArrow $wide $center />
    <SectionSep $left={5} $right={8} />
    <ToolBtn><AddPropIcon /></ToolBtn>
  </SectionTools>
);

const App = () => (
  <Screen>
    <GlobalStyle />
    <TitleBar>
      <WindowTitle>Plug-in Development - pos.example/src/pos/example/parts/Compras.java - Eclipse</WindowTitle>
      <Tray>
        <MailIcon />
        <TraySlot $left={14}><TrafficIcon /></TraySlot>
        <TraySlot $left={14}><VolumeIcon /></TraySlot>
        <TrayText $left={13} $tight>jue 28 de feb 11:25</TrayText>
        <TraySlot $left={12}><UserIcon /></TraySlot>
        <TrayText $left={6}>Leandro</TrayText>
        <TraySlot $left={14}><PowerIcon /></TraySlot>
      </Tray>
    </TitleBar>

    <Desktop>
      <Launcher>
        {launcherItems.map((item, i) => (
          <Tile key={i} $bg={item.bg}>
            {item.pip && <Pip />}
            {item.pipRight && <Pip $right />}
            {item.node}
          </Tile>
        ))}
        <Tile $bg="linear-gradient(#c3a478, #a67c50)">
          <Pip />
          <CountBadge>2</CountBadge>
          <TileLow><UpdateArrow /></TileLow>
        </Tile>
        <Tile $bg="linear-gradient(#2c4a9e, #1c3478)"><WorkspaceLogo /></Tile>
        <Tile $bg="linear-gradient(#2c4a9e, #1c3478)" $push><TrashLogo /></Tile>
      </Launcher>

      <Workbench>
        <MenuBar>
          {['File', 'Edit', 'Source', 'Refactor', 'Navigate', 'Search', 'Project', 'Run', 'Window', 'Help'].map((m) => (
            <span key={m}>{m}</span>
          ))}
        </MenuBar>

        <MainToolbar>
          {mainTools.map(([kind, Icon], i) => {
            if (kind === 'grip') return <Grip key={i} $left={typeof Icon === 'number' ? Icon : 0} />;
            if (kind === 'drop') return <DropArrow key={i} />;
            if (kind === 'faded') return <DropArrow key={i} $faded />;
            if (kind === 'line') return <ToolLine key={i} />;
            return <ToolBtn key={i}><Icon /></ToolBtn>;
          })}
        </MainToolbar>

        <SecondaryBar>
          <QuickAccess><SearchGlass />Quick Access</QuickAccess>
          <GripSlot><Grip /></GripSlot>
          <PerspectiveBar>
            <OpenPerspectiveIcon />
            <PerspectiveSep />
            <PerspectiveBtn $active $gap={3} $width={167}><PluginPerspectiveIcon />Plug-in Development</PerspectiveBtn>
            <PerspectiveBtn $gap={3} $width={156}><TeamIcon />Team Synchronizing</PerspectiveBtn>
          </PerspectiveBar>
        </SecondaryBar>

        <MainArea>
          <TrimColumn>
            <Trim>
              <TrimCell><RestoreIcon color="#5a5040" size={10} /></TrimCell>
              <TrimCell><PartHierarchyIcon /></TrimCell>
              <TrimCell><GreenTreeIcon /></TrimCell>
              <TrimCell><BindingsPartIcon /></TrimCell>
            </Trim>
          </TrimColumn>

          <EditorCard>
            <TabStrip>
              <Tab $active $width={140}>
                <DesignerTabIcon />Compras.java<CloseSlot><CloseGlyph /></CloseSlot>
              </Tab>
              <Tab $width={170}><FileTypeIcon />LectorTarjeta.java</Tab>
              <Tab $width={173}><XmiIcon />Application.e4xmi</Tab>
              <Tab $width={210}><FileTypeIcon />IngresoTarjetaHandler.java</Tab>
              <StripSpacer />
              <PartControls>
                <MinimizeIcon />
                <RestoreIcon />
              </PartControls>
            </TabStrip>

            <Form>
              <BoundHeader>
                <BoundLabel>Bound Properties:</BoundLabel>
                <SectionTools $pad={2}>
                  <ToolBtn><RefreshIcon /></ToolBtn>
                  <SectionSep />
                  <ToolBtn><LinkIcon badge="edit" /></ToolBtn>
                  <SectionSep />
                  <ToolBtn><LinkIcon badge="remove" /></ToolBtn>
                  <ToolBtn><LinkIcon badge="removeAll" /></ToolBtn>
                  <SectionSep />
                  <ToolBtn><UpArrowIcon /></ToolBtn>
                  <ToolBtn><DownArrowIcon /></ToolBtn>
                  <SectionSep />
                  <ToolBtn><NewBindIcon /></ToolBtn>
                </SectionTools>
              </BoundHeader>

              <Table>
                <HeadRow>
                  <HeadCell />
                  <HeadCell>Target</HeadCell>
                  <HeadCell>Model</HeadCell>
                  <HeadCell>Target Strategy</HeadCell>
                  <HeadCell>Model Strategy</HeadCell>
                  <HeadCell>Binding</HeadCell>
                </HeadRow>
                {bindings.map((b, i) => (
                  <BodyRow key={i} $state={b.state}>
                    <IconCell>{b.icon}</IconCell>
                    {b.cells.map((c, j) => (
                      <BodyCell key={j} $last={j === 4}>{c}</BodyCell>
                    ))}
                  </BodyRow>
                ))}
              </Table>

              <PanelGrid>
                <Panel>
                  <PanelTitle>Target (Widgets): null.composite_4.txtBusqueda.text</PanelTitle>
                  <FilterRow>
                    <FilterInput>type filter text</FilterInput>
                    <FilterTools on="tree" />
                  </FilterRow>
                  <ListRow $gap={4}>
                    <ListBox $width={574} $height={96}>
                      <ListInner $offset={-10}>
                        <Row $indent={10}><Twisty $open /><RowIcon $left={2}><CheckBoxIcon /></RowIcon>composite_4</Row>
                        <Row $indent={36}><RowIcon><LabelIcon /></RowIcon>lblBsqueda - "Búsqueda:"</Row>
                        <Row $indent={36} $selected><RowIcon><TextWidgetIcon /></RowIcon>txtBusqueda</Row>
                        <Row $indent={10}><Twisty $open /><RowIcon $left={2}><CheckBoxIcon /></RowIcon>composite_3</Row>
                        <Row $indent={20}><Twisty $open /><RowIcon $left={3}><TableIcon /></RowIcon>tblProductos</Row>
                      </ListInner>
                    </ListBox>
                    <ThumbScroll height={96} top={26} size={30} />
                  </ListRow>
                  <SectionHead>
                    <span>Properties:</span>
                    <PropertyTools />
                  </SectionHead>
                  <ListRow $gap={4}>
                    <ListBox $width={574} $height={118}>
                      <ListInner $offset={1}>
                        <Row $indent={14} $italic><RowIcon><PropIcon letter="c" color="#ee1111" /></RowIcon>foreground</Row>
                        <Row $indent={14} $italic><RowIcon><PropIcon /></RowIcon>location</Row>
                        <Row $indent={14} $bold><RowIcon><PropIcon letter="s" color="#2222dd" /></RowIcon>message</Row>
                        <Row $indent={14} $italic><RowIcon><PropIcon /></RowIcon>size</Row>
                        <Row $indent={14} $bold $selected><RowIcon><PropIcon letter="s" color="#2222dd" target /></RowIcon>text</Row>
                      </ListInner>
                    </ListBox>
                    <ThumbScroll height={118} top={41} size={34} />
                  </ListRow>
                </Panel>

                <Panel>
                  <PanelTitle>Model (Beans): productFilter.Detail for IObservableValue</PanelTitle>
                  <FilterRow>
                    <FilterInput>type filter text</FilterInput>
                    <FilterTools on="beans" />
                  </FilterRow>
                  <ListRow $gap={3}>
                    <ListBox $width={574} $height={96}>
                      <ListInner $offset={-13}>
                        <Row $indent={14}><RowIcon><TextTreeIcon /></RowIcon>txtBusqueda - Text</Row>
                        <Row $indent={0} $selected><Twisty /><RowIcon $left={5}><BeanItemIcon /></RowIcon>productFilter - WritableValue</Row>
                        <Row $indent={14}><RowIcon><MethodIcon /></RowIcon>getClass()</Row>
                        <Row $indent={14}><RowIcon><MethodIcon /></RowIcon>getTxtIDTarjeta()</Row>
                        <Row $indent={14}><RowIcon><MethodIcon /></RowIcon>getTxtNombre()</Row>
                      </ListInner>
                    </ListBox>
                    <ThumbScroll height={96} top={23} size={30} />
                  </ListRow>
                  <SectionHead>
                    <span>Properties:</span>
                    <PropertyTools />
                  </SectionHead>
                  <ListBox $width={590} $height={118}>
                    <Row $indent={14} $bold $italic><RowIcon><PropIcon letter="*" color="#a01010" /></RowIcon>Object as IObservableValue</Row>
                    <Row $indent={14} $bold $italic $selected><RowIcon><PropIcon letter="*" color="#a01010" target /></RowIcon>Detail for IObservableValue</Row>
                    <Row $indent={14}><RowIcon><PropIcon letter="b" color="#a01010" /></RowIcon>disposed</Row>
                    <Row $indent={0} $italic><Twisty /><RowIcon $left={5}><PropIcon /></RowIcon>realm</Row>
                    <Row $indent={14}><RowIcon><PropIcon letter="b" color="#a01010" /></RowIcon>stale</Row>
                  </ListBox>
                </Panel>
              </PanelGrid>
            </Form>

            <BottomTabs>
              <PageTab $width={75} $pad={5} $sep><SourcePageIcon />Source</PageTab>
              <PageTab $width={73} $pad={4}><DesignPageIcon />Design</PageTab>
              <PageTab $width={83} $pad={4} $active><PaperclipIcon />Bindings</PageTab>
            </BottomTabs>
          </EditorCard>

          <TrimColumn>
            <Trim>
              <TrimCell><RestoreIcon color="#5a5040" size={10} /></TrimCell>
              <TrimCell><ChecklistIcon /></TrimCell>
              <TrimCell><OutlineDocIcon /></TrimCell>
            </Trim>
            <Trim>
              <TrimCell><RestoreIcon color="#5a5040" size={10} /></TrimCell>
              <TrimCell><ProblemsIcon /></TrimCell>
              <TrimCell><TasksIcon /></TrimCell>
              <TrimCell><ErrorLogIcon /></TrimCell>
              <TrimCell><ConsoleIcon /></TrimCell>
            </Trim>
          </TrimColumn>
        </MainArea>

        <StatusBar>
          <StatusCell $width={651} $pad={3} $size={14.2} $sep>Syntax error on token "ñ00100609664040009044_", delete this token</StatusCell>
          <StatusCell $width={118} $pad={6} $size={15} $sep>Writable</StatusCell>
          <StatusCell $width={112} $pad={7} $size={14} $sep>Smart Insert</StatusCell>
          <StatusCell $width={107} $pad={7} $size={14}>395 : 2</StatusCell>
          <StatusGrip />
        </StatusBar>
      </Workbench>
    </Desktop>
  </Screen>
);

export default App;
